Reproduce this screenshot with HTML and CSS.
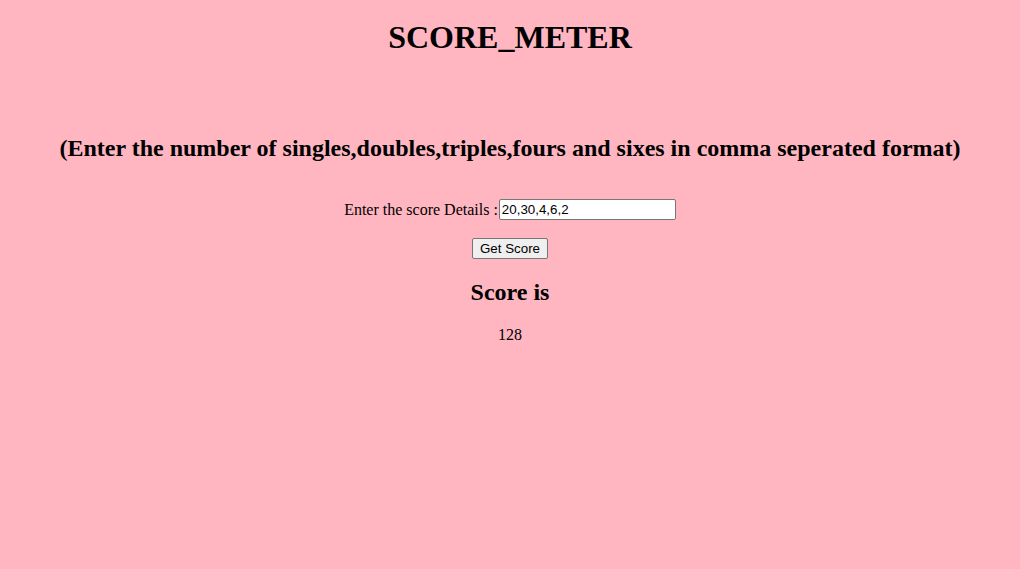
FILE: index.html
```html
<!DOCTYPE html>
<html>
<head>
<meta charset="utf-8">
<title>Score Meter</title>
<link rel="stylesheet" href="styles.css">
</head>
<body class="page">
<h1 class="title">SCORE_METER</h1>
<h2 class="subtitle">(Enter the number of singles,doubles,triples,fours and sixes in comma seperated format)</h2>
<div class="form-row">
<label class="label" for="score">Enter the score Details :</label><input class="field" id="score" type="text" value="20,30,4,6,2">
</div>
<div class="button-row"><button class="btn" type="button">Get Score</button></div>
<h2 class="result-title">Score is</h2>
<p class="result">128</p>
</body>
</html>
```
FILE: styles.css
```css
html, body {
  background: #ffb6c1;
}
.page {
  margin: 0;
  padding: 0;
  font-family: "Liberation Serif", "Times New Roman", serif;
  color: #000;
  text-align: center;
}
.title {
  font-size: 32px;
  font-weight: bold;
  margin: 19px 0 0;
  line-height: 37px;
}
.subtitle {
  font-size: 24px;
  font-weight: bold;
  margin: 78px 0 0;
  line-height: 28px;
}
.form-row {
  margin-top: 37px;
  font-size: 16px;
  line-height: 21px;
  display: flex;
  justify-content: center;
  align-items: center;
}
.label {
  font-size: 16px;
}
.field {
  font-family: "Liberation Sans", Arial, sans-serif;
  font-size: 13.33px;
  width: 171px;
  height: 17px;
  padding: 1px 2px;
  margin: 0 0 0 1px;
  border: 1px solid #767676;
  border-radius: 2px;
  background: #fff;
  color: #000;
  box-sizing: content-box;
}
.button-row {
  margin-top: 18px;
}
.btn {
  font-family: "Liberation Sans", Arial, sans-serif;
  font-size: 13.33px;
  padding: 1px 7px;
  height: 21px;
  border: 1px solid #767676;
  border-radius: 2px;
  background: #efefef;
  color: #000;
}
.result-title {
  font-size: 24px;
  font-weight: bold;
  margin: 19px 0 0;
  line-height: 28px;
}
.result {
  font-size: 16px;
  margin: 20px 0 0;
  line-height: 18px;
}
```
